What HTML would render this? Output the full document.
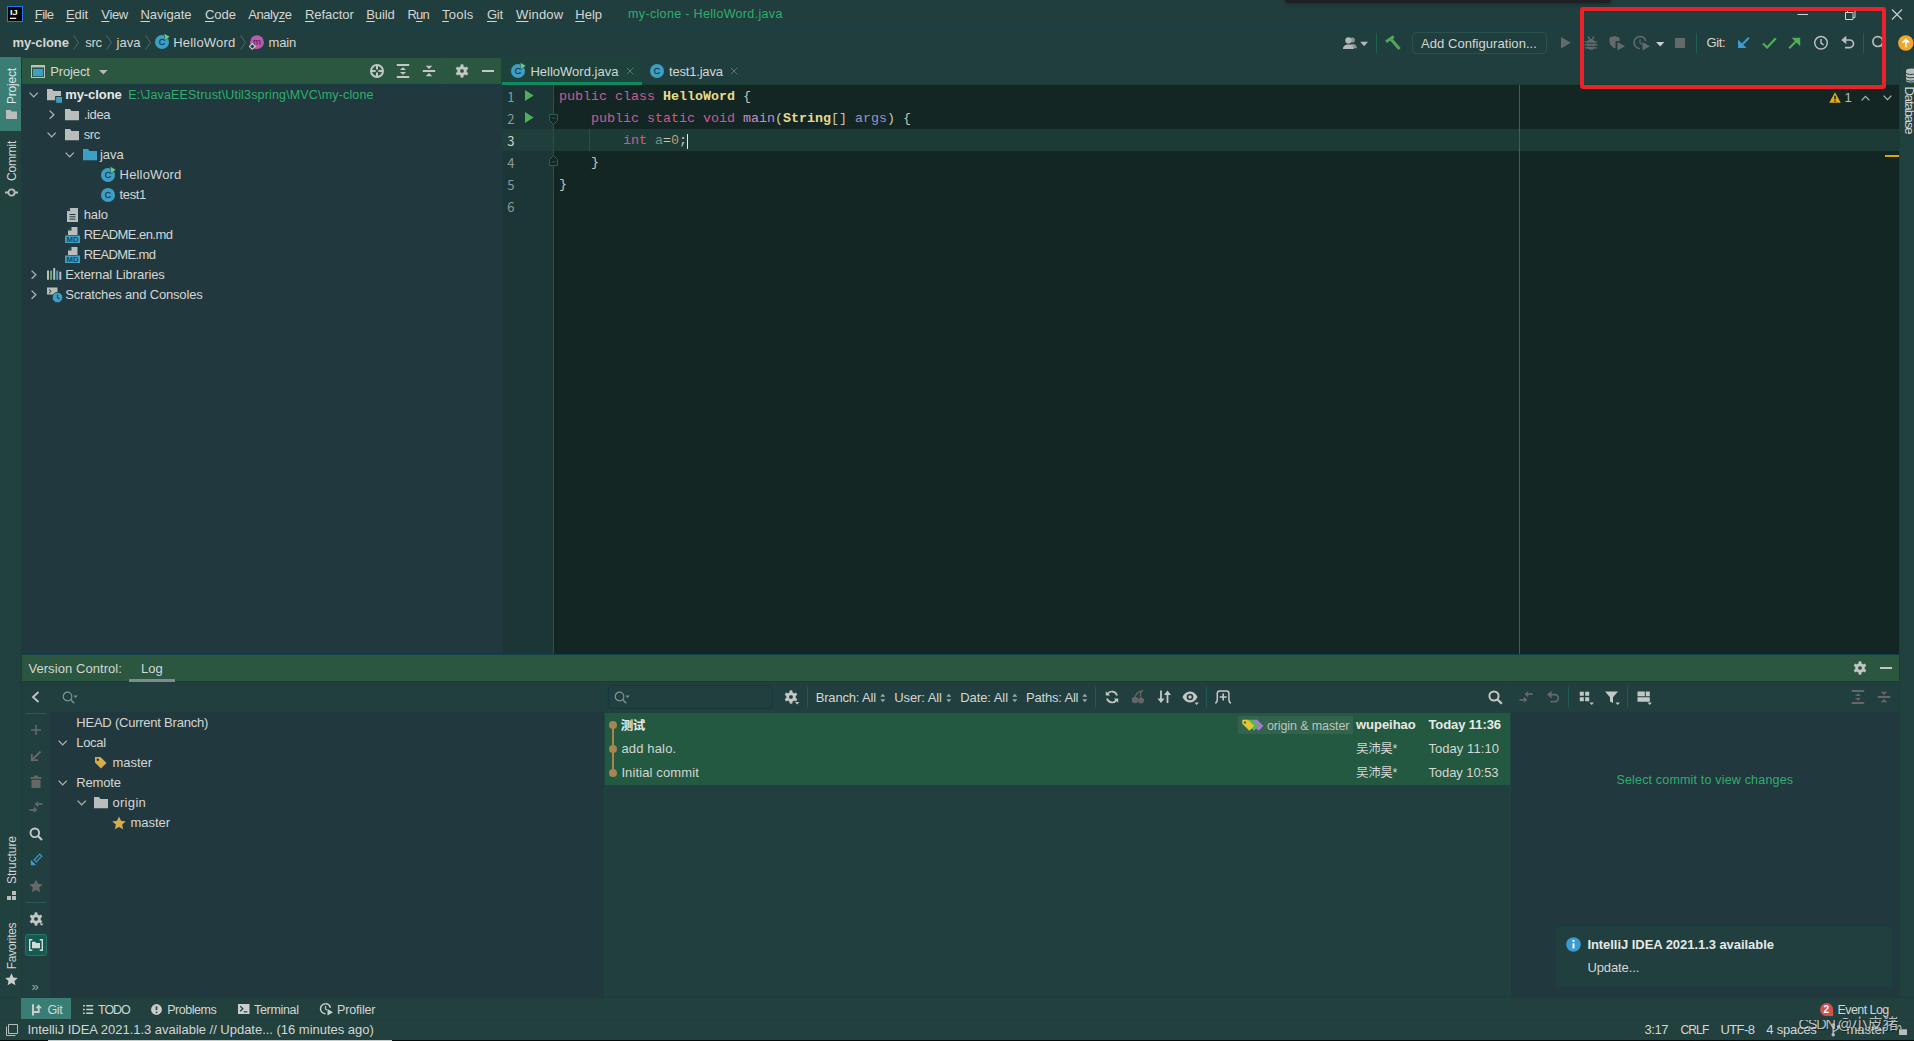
<!DOCTYPE html>
<html lang="en">
<head>
<meta charset="utf-8">
<title>my-clone - HelloWord.java</title>
<style>
*{box-sizing:border-box;margin:0;padding:0}
html,body{width:1914px;height:1041px;overflow:hidden;background:#213e3e}
body{position:relative;font-family:"Liberation Sans","Noto Sans CJK SC",sans-serif;font-size:13px;color:#d4d6d3;line-height:1}
.a{position:absolute}
.t{position:absolute;white-space:nowrap;line-height:16px;height:16px;transform-origin:0 50%}
.b{font-weight:bold}
.g{color:#2fae6d}
u{text-decoration-thickness:1px;text-underline-offset:2px}
.mono{font-family:"Liberation Mono",monospace;font-size:13.333px;line-height:22px;white-space:pre;position:absolute;height:22px}
.kw{color:#cf5a8f}
.cls{color:#e6dc8c;font-weight:bold}
.pl{color:#c5c8b4}
.arg{color:#9d90c8}
.lv{color:#6f9384}
.ln{position:absolute;left:507.3px;width:20px;font-size:13px;font-family:"Noto Sans CJK SC","Liberation Sans",sans-serif;color:#8ea09c;height:22px;line-height:22px}
svg{position:absolute;overflow:visible}
</style>
</head>
<body>
<!-- ===== base regions ===== -->
<div class="a" id="menubar" style="left:0;top:0;width:1914px;height:28px;background:#213e3e"></div>
<div class="a" style="left:0;top:28px;width:1914px;height:1px;background:#173f48"></div>
<div class="a" id="navbar" style="left:0;top:29px;width:1914px;height:28px;background:#213e3e"></div>
<div class="a" style="left:0;top:57px;width:1914px;height:1px;background:#144834"></div>
<!-- left stripe -->
<div class="a" id="lstripe" style="left:0;top:58px;width:22px;height:939px;background:#21413e;border-right:1px solid #1b3c3a"></div>
<div class="a" style="left:0;top:57px;width:21px;height:74px;background:#3a7d74"></div>
<!-- project panel -->
<div class="a" id="projhead" style="left:22px;top:58px;width:479px;height:26px;background:#2b5741"></div>
<div class="a" id="projtree" style="left:22px;top:84px;width:479px;height:570px;background:#21393e"></div>
<!-- editor -->
<div class="a" id="tabs" style="left:502px;top:58px;width:1397px;height:27px;background:#213e3e"></div>
<div class="a" style="left:502px;top:84px;width:1397px;height:1px;background:#143f31"></div>
<div class="a" id="editor" style="left:502px;top:85px;width:1397px;height:569px;background:#132623"></div>
<div class="a" id="gutter" style="left:502px;top:85px;width:52px;height:569px;background:#1c3637"></div>
<div class="a" style="left:553px;top:85px;width:1px;height:569px;background:#2b4f4b"></div>
<div class="a" style="left:501px;top:58px;width:1px;height:596px;background:#18443c"></div>
<!-- right stripe -->
<div class="a" id="rstripe" style="left:1899px;top:58px;width:15px;height:939px;background:#21413e;border-left:1px solid #1b3c3a"></div>
<!-- bottom panel -->
<div class="a" style="left:22px;top:654px;width:1877px;height:1px;background:#123f47"></div>
<div class="a" id="vchead" style="left:22px;top:655px;width:1877px;height:26px;background:#2b5741"></div>
<div class="a" style="left:22px;top:681px;width:1877px;height:1px;background:#113c45"></div>
<div class="a" id="vcbody" style="left:22px;top:682px;width:1877px;height:315px;background:#21393e"></div>
<!-- bottom stripes -->
<div class="a" style="left:0;top:997px;width:1914px;height:1px;background:#1a3d3e;z-index:2"></div>
<div class="a" id="bstripe" style="left:0;top:997px;width:1914px;height:23px;background:#21403e"></div>
<div class="a" style="left:0;top:1019px;width:1914px;height:1px;background:#173f45;z-index:2"></div>
<div class="a" id="status" style="left:0;top:1020px;width:1914px;height:21px;background:#21403e;border-bottom:1px solid #050808"></div>
<svg style="left:7px;top:6px;" width="16" height="16" viewBox="0 0 16 16"><rect x="0.500" y="0.500" width="15" height="15" fill="#000" stroke="#2178f2" stroke-width="1"/><text x="3" y="8.800" font-family="Liberation Sans,sans-serif" font-weight="bold" font-size="7.800" fill="#fff" textLength="7.800" lengthAdjust="spacingAndGlyphs">IJ</text><rect x="3" y="11.700" width="6.200" height="1.200" fill="#fff"/></svg>
<svg style="left:1797px;top:9px;" width="110" height="12" viewBox="0 0 110 12"><path d="M0.5 5.5h10.5" stroke="#cfd3d1" stroke-width="1" fill="none"/><path d="M48.5 3.5h7.5v7h-7.5zM50.5 3.5v-2h7.5v7h-2" stroke="#cfd3d1" stroke-width="1" fill="none"/><path d="M95 0.5l10 10M105 0.5l-10 10" stroke="#cfd3d1" stroke-width="1.1" fill="none"/></svg>
<div class="a" style="left:1285px;top:0px;width:326px;height:2.6px;background:#1e2024;border-radius:0 0 5px 5px;box-shadow:0 1px 4px rgba(0,0,0,0.4)"></div>
<div class="t" style="left:34.8px;top:6.5px;letter-spacing:-0.57px"><u>F</u>ile</div>
<div class="t" style="left:65.9px;top:6.5px;letter-spacing:-0.08px"><u>E</u>dit</div>
<div class="t" style="left:101.3px;top:6.5px;letter-spacing:-0.36px"><u>V</u>iew</div>
<div class="t" style="left:140.5px;top:6.5px;letter-spacing:-0.03px"><u>N</u>avigate</div>
<div class="t" style="left:205px;top:6.5px;letter-spacing:-0.07px"><u>C</u>ode</div>
<div class="t" style="left:248.2px;top:6.5px;letter-spacing:-0.41px">Analy<u>z</u>e</div>
<div class="t" style="left:305px;top:6.5px;letter-spacing:-0.04px"><u>R</u>efactor</div>
<div class="t" style="left:366.2px;top:6.5px;letter-spacing:-0.10px"><u>B</u>uild</div>
<div class="t" style="left:407.4px;top:6.5px;letter-spacing:-0.72px">R<u>u</u>n</div>
<div class="t" style="left:442.1px;top:6.5px;letter-spacing:0.23px"><u>T</u>ools</div>
<div class="t" style="left:487px;top:6.5px;letter-spacing:-0.31px"><u>G</u>it</div>
<div class="t" style="left:516px;top:6.5px;letter-spacing:0.16px"><u>W</u>indow</div>
<div class="t" style="left:575.3px;top:6.5px;letter-spacing:-0.01px"><u>H</u>elp</div>
<div class="t" style="left:628.1px;top:6px;font-size:12.5px;color:#2fae6d;letter-spacing:0.33px">my-clone - HelloWord.java</div>

<svg style="left:72.8px;top:35px;" width="6" height="15" viewBox="0 0 6 15"><path d="M0.500 0.400l5 7.100l-5 7.100" stroke="#4f6c6a" stroke-width="1" fill="none"/></svg>
<svg style="left:106.2px;top:35px;" width="6" height="15" viewBox="0 0 6 15"><path d="M0.500 0.400l5 7.100l-5 7.100" stroke="#4f6c6a" stroke-width="1" fill="none"/></svg>
<svg style="left:144.8px;top:35px;" width="6" height="15" viewBox="0 0 6 15"><path d="M0.500 0.400l5 7.100l-5 7.100" stroke="#4f6c6a" stroke-width="1" fill="none"/></svg>
<svg style="left:240px;top:35px;" width="6" height="15" viewBox="0 0 6 15"><path d="M0.500 0.400l5 7.100l-5 7.100" stroke="#4f6c6a" stroke-width="1" fill="none"/></svg>
<svg style="left:154.3px;top:34.3px;" width="16" height="16" viewBox="0 0 16 16"><circle cx="8" cy="8" r="7" fill="#3d9fc6"/><text x="8" y="11.4" text-anchor="middle" font-family="Liberation Sans,sans-serif" font-size="9.5" fill="#173f50" textLength="6.400" lengthAdjust="spacingAndGlyphs" stroke="#173f50" stroke-width="0.300">C</text><path d="M10.3 -0.6l5.700 3.300l-5.200 3.900z" fill="#6acb86" stroke="#21403d" stroke-width="0.500"/></svg>
<svg style="left:249px;top:34px;" width="16" height="16" viewBox="0 0 16 16"><circle cx="8" cy="8.200" r="6.900" fill="#b85bab"/><text x="8" y="10.800" text-anchor="middle" font-family="Liberation Sans,sans-serif" font-size="9.500" fill="#451a42">m</text><path d="M3.300 9.500l2.900 2.900l-2.900 2.900l-2.900-2.900z" fill="#213e3e" stroke="#cfd4d3" stroke-width="1.100"/></svg>
<svg style="left:1343px;top:37px;" width="26" height="12" viewBox="0 0 26 12"><circle cx="9.300" cy="3" r="2.600" fill="#8e9494"/><path d="M7.500 7h3c2.300.700 3.500 1.700 3.500 4.300h-4z" fill="#8e9494"/><circle cx="5.400" cy="3.400" r="3.100" fill="#b3b8b8"/><path d="M0 12c0-2.600 1.300-3.700 3.900-4.500h3c2.600.8 3.900 1.900 3.900 4.500z" fill="#b3b8b8"/><path d="M17.200 4.800h7.800l-3.900 4.400z" fill="#b3b8b8"/></svg>
<div class="a" style="left:1376px;top:33px;width:1px;height:20px;background:#1f5f52;"></div>
<svg style="left:1385px;top:36px;" width="16" height="14" viewBox="0 0 16 14"><path d="M1 5.800l7.800-5.300" stroke="#4fa85a" stroke-width="3" fill="none"/><path d="M6 3.300l8.600 9.600" stroke="#4fa85a" stroke-width="3" fill="none"/></svg>
<div class="a" style="left:1412px;top:32px;width:135px;height:22px;border:1px solid #29524a;border-radius:4px"></div>
<svg style="left:1561px;top:37.3px;" width="10" height="12" viewBox="0 0 10 12"><path d="M0 0l9.800 5.800l-9.800 5.800z" fill="#636a6a"/></svg>
<svg style="left:1584px;top:36px;" width="14" height="14" viewBox="0 0 14 14"><path d="M3.800 0.500l2 2.200M10.200 0.500l-2 2.200" stroke="#636a6a" stroke-width="1.400"/><ellipse cx="7" cy="8.300" rx="4.300" ry="5.500" fill="#636a6a"/><path d="M0.800 5.800h12.400M0.500 8.800h13M0.800 11.800h12.400" stroke="#636a6a" stroke-width="1.300"/><path d="M3.600 7.300h6.800M3.600 10.300h6.800" stroke="#213c3d" stroke-width="1"/></svg>
<svg style="left:1608px;top:35px;" width="18" height="16" viewBox="0 0 18 16"><path d="M1.500 2.500l5-1.500l5 1.500v3.500l-4 0v7.500c-3.500-1-6-4-6-7.500z" fill="#636a6a"/><path d="M9.500 7l7.500 4.300l-7.500 4.300z" fill="#636a6a"/></svg>
<svg style="left:1632px;top:35px;" width="20" height="16" viewBox="0 0 20 16"><path d="M8 1.500a6 6 0 1 0 .01 12" stroke="#636a6a" stroke-width="1.600" fill="none"/><path d="M8 1.500a6 6 0 0 1 5.800 4.500" stroke="#636a6a" stroke-width="1.600" fill="none"/><path d="M8 4.500v3.500l2 1.500" stroke="#636a6a" stroke-width="1.300" fill="none"/><path d="M10.500 7l7.500 4.300l-7.500 4.300z" fill="#636a6a"/></svg>
<svg style="left:1656px;top:41.7px;" width="9" height="5" viewBox="0 0 9 5"><path d="M0 0h8.400l-4.200 4.600z" fill="#c9cecd"/></svg>
<div class="a" style="left:1675px;top:38px;width:10px;height:10px;background:#636a6a;"></div>
<div class="a" style="left:1696px;top:33px;width:1px;height:20px;background:#1f5f52;"></div>
<svg style="left:1737px;top:36px;" width="14" height="14" viewBox="0 0 14 14"><path d="M11.900 1.700l-7.500 7.500" stroke="#3b9ad0" stroke-width="2.100" fill="none"/><path d="M1 3.400v8.600h8.600z" fill="#3b9ad0"/></svg>
<svg style="left:1761px;top:36px;" width="18" height="14" viewBox="0 0 18 14"><path d="M2 7.500l4.200 4l8.600-9.300" stroke="#4fae5a" stroke-width="2.200" fill="none"/></svg>
<svg style="left:1787px;top:36px;" width="16" height="14" viewBox="0 0 16 14"><path d="M2.200 12.300l7.500-7.500" stroke="#4fae5a" stroke-width="2.100" fill="none"/><path d="M4.600 1.700h8.600v8.600z" fill="#4fae5a"/></svg>
<svg style="left:1813px;top:35px;" width="16" height="16" viewBox="0 0 16 16"><circle cx="8" cy="7.800" r="6.300" stroke="#b9bdbd" stroke-width="1.500" fill="none"/><path d="M8 4v4l2.600 1.800" stroke="#b9bdbd" stroke-width="1.500" fill="none"/></svg>
<svg style="left:1840px;top:35px;" width="16" height="16" viewBox="0 0 16 16"><path d="M5.500 5h4.200a3.800 3.800 0 0 1 0 7.600h-4.700" stroke="#b9bdbd" stroke-width="1.700" fill="none"/><path d="M6.300 0.800v8.400l-5-4.200z" fill="#b9bdbd"/></svg>
<div class="a" style="left:1863px;top:33px;width:1px;height:20px;background:#1f5f52;"></div>
<svg style="left:1871px;top:35px;" width="16" height="16" viewBox="0 0 16 16"><circle cx="6.800" cy="6.600" r="4.900" stroke="#b9bdbd" stroke-width="1.700" fill="none"/><path d="M10.300 10.200l4.200 4.300" stroke="#b9bdbd" stroke-width="1.900" fill="none"/></svg>
<svg style="left:1898px;top:35px;" width="16" height="16" viewBox="0 0 16 16"><circle cx="7.800" cy="8" r="7.700" fill="#f0a732"/><path d="M7.800 12.300v-7.500M4.600 7.600l3.200-3.200l3.200 3.200" stroke="#fff" stroke-width="1.700" fill="none"/></svg>
<div class="t" style="left:12.4px;top:34.5px;font-weight:bold;letter-spacing:-0.07px">my-clone</div>
<div class="t" style="left:85.3px;top:34.5px;letter-spacing:-0.31px">src</div>
<div class="t" style="left:116.5px;top:34.5px;letter-spacing:0.04px">java</div>
<div class="t" style="left:173.2px;top:34.5px;letter-spacing:0.21px">HelloWord</div>
<div class="t" style="left:268.6px;top:34.5px;letter-spacing:-0.20px">main</div>
<div class="t" style="left:1421px;top:35.7px;letter-spacing:0.05px">Add Configuration...</div>
<div class="t" style="left:1706.5px;top:35px;letter-spacing:-0.36px">Git:</div>

<svg style="left:31px;top:65px;" width="14" height="13" viewBox="0 0 14 13"><rect x="0.500" y="0.500" width="13" height="12" fill="none" stroke="#b9c3bd" stroke-width="1"/><rect x="0" y="0" width="14" height="2.400" fill="#b9c3bd"/><rect x="2" y="4" width="10" height="7.200" fill="#3d9fc6"/></svg>
<svg style="left:99px;top:70px;" width="9" height="5" viewBox="0 0 9 5"><path d="M0 0h8.600l-4.300 4.600z" fill="#b4b9b8"/></svg>
<svg style="left:370px;top:64px;" width="14" height="14" viewBox="0 0 14 14"><circle cx="7" cy="7" r="6" stroke="#c3c8c6" stroke-width="2" fill="none"/><path d="M7 1v4.600M7 8.400v4.600M1 7h4.600M8.400 7h4.600" stroke="#c3c8c6" stroke-width="2"/></svg>
<svg style="left:396px;top:64px;" width="14" height="14" viewBox="0 0 14 14"><path d="M0.800 1h12.400M0.800 13h12.400" stroke="#c3c8c6" stroke-width="2"/><path d="M7 3.300l3.100 2.800h-6.200zM7 10.700l3.100-2.800h-6.200z" fill="#c3c8c6"/></svg>
<svg style="left:422px;top:64px;" width="14" height="14" viewBox="0 0 14 14"><path d="M0.800 7h12.400" stroke="#c3c8c6" stroke-width="2"/><path d="M7 4.900l3.300-3.200h-6.600zM7 9.100l3.300 3.200h-6.600z" fill="#c3c8c6"/></svg>
<div class="a" style="left:445px;top:62px;width:1px;height:19px;background:#1f5a55;"></div>
<div class="a" style="left:22px;top:84px;width:479px;height:1px;background:#143f42;"></div>
<svg style="left:455px;top:64px;" width="14" height="14" viewBox="0 0 14 14"><path d="M5.61 2.51L5.83 0.61L8.17 0.61L8.39 2.51L10.19 3.55L11.95 2.79L13.12 4.81L11.58 5.96L11.58 8.04L13.12 9.19L11.95 11.21L10.19 10.45L8.39 11.49L8.17 13.39L5.83 13.39L5.61 11.49L3.81 10.45L2.05 11.21L0.88 9.19L2.42 8.04L2.42 5.96L0.88 4.81L2.05 2.79L3.81 3.55zM9.10 7.00a2.1 2.1 0 1 0 -4.20 0a2.1 2.1 0 1 0 4.20 0z" fill="#c3c8c6" fill-rule="evenodd" stroke="#c3c8c6" stroke-width="0.3" stroke-linejoin="round"/></svg>
<div class="a" style="left:482px;top:70px;width:12px;height:2px;background:#c3c8c6;"></div>
<svg style="left:6px;top:110px;" width="11" height="9" viewBox="0 0 11 9"><path d="M0 0h4.500l1 1.500h5.500v7.500h-11z" fill="#b9bebd"/></svg>
<svg style="left:5px;top:187.5px;" width="13" height="9" viewBox="0 0 13 9"><circle cx="6.500" cy="4.500" r="3.100" stroke="#b9bebd" stroke-width="1.800" fill="none"/><path d="M0 4.500h3.200M9.800 4.500h3.200" stroke="#b9bebd" stroke-width="1.800"/></svg>
<svg style="left:28.5px;top:92px;" width="10" height="6" viewBox="0 0 10 6"><path d="M0.600 0.600l4.100 4.300l4.100-4.300" stroke="#aeb4b3" stroke-width="1.300" fill="none"/></svg>
<svg style="left:47px;top:89px;" width="16" height="14" viewBox="0 0 16 14"><path d="M0 0h5l1.500 2h7.500v9.200h-14z" fill="#b9bebd"/><rect x="8.700" y="7.500" width="6.800" height="6.800" fill="#3d9fc6" stroke="#213a3d" stroke-width="1"/></svg>
<svg style="left:49px;top:110.2px;" width="6" height="10" viewBox="0 0 6 10"><path d="M0.600 0.600l4.300 4.100l-4.300 4.100" stroke="#aeb4b3" stroke-width="1.300" fill="none"/></svg>
<svg style="left:65px;top:109px;" width="14" height="12" viewBox="0 0 14 12"><path d="M0 0h5l1.500 2h7.500v9.200h-14z" fill="#b9bebd"/></svg>
<svg style="left:46.7px;top:132px;" width="10" height="6" viewBox="0 0 10 6"><path d="M0.600 0.600l4.100 4.300l4.100-4.300" stroke="#aeb4b3" stroke-width="1.300" fill="none"/></svg>
<svg style="left:65px;top:129px;" width="14" height="12" viewBox="0 0 14 12"><path d="M0 0h5l1.500 2h7.500v9.200h-14z" fill="#b9bebd"/></svg>
<svg style="left:65.2px;top:152px;" width="10" height="6" viewBox="0 0 10 6"><path d="M0.600 0.600l4.100 4.300l4.100-4.300" stroke="#aeb4b3" stroke-width="1.300" fill="none"/></svg>
<svg style="left:83px;top:149px;" width="14" height="12" viewBox="0 0 14 12"><path d="M0 0h5l1.500 2h7.500v9.200h-14z" fill="#3d9fc6"/></svg>
<svg style="left:100.3px;top:166.8px;" width="16" height="16" viewBox="0 0 16 16"><circle cx="8" cy="8" r="7" fill="#3d9fc6"/><text x="8" y="11.4" text-anchor="middle" font-family="Liberation Sans,sans-serif" font-size="9.5" fill="#173f50" textLength="6.400" lengthAdjust="spacingAndGlyphs" stroke="#173f50" stroke-width="0.300">C</text><path d="M10.3 -0.6l5.700 3.300l-5.200 3.900z" fill="#6acb86" stroke="#21403d" stroke-width="0.500"/></svg>
<svg style="left:100.3px;top:186.8px;" width="16" height="16" viewBox="0 0 16 16"><circle cx="8" cy="8" r="7" fill="#3d9fc6"/><text x="8" y="11.4" text-anchor="middle" font-family="Liberation Sans,sans-serif" font-size="9.5" fill="#173f50" textLength="6.400" lengthAdjust="spacingAndGlyphs" stroke="#173f50" stroke-width="0.300">C</text></svg>
<svg style="left:67px;top:208px;" width="11" height="14" viewBox="0 0 11 14"><path d="M3.500 0h7.500v14h-11v-10.500z" fill="#b9bebd"/><path d="M0 3.500h3.500v-3.500" fill="#213a3d" stroke="#b9bebd" stroke-width="0.800"/><path d="M2.500 6.500h6M2.500 8.800h6M2.500 11.100h6" stroke="#213a3d" stroke-width="1"/></svg>
<svg style="left:65px;top:227px;" width="16" height="16" viewBox="0 0 16 16"><path d="M6.500 0h6v8h-9.500v-4.500z" fill="#b9bebd"/><path d="M3 3.500h3.500v-3.500" fill="#213a3d"/><rect x="0" y="8.500" width="15" height="7.500" fill="#3d9fc6"/><text x="7.500" y="15" text-anchor="middle" font-family="Liberation Sans,sans-serif" font-weight="bold" font-size="6.500" fill="#1d4a5c" textLength="12" lengthAdjust="spacingAndGlyphs">MD</text></svg>
<svg style="left:65px;top:247px;" width="16" height="16" viewBox="0 0 16 16"><path d="M6.500 0h6v8h-9.500v-4.500z" fill="#b9bebd"/><path d="M3 3.500h3.500v-3.500" fill="#213a3d"/><rect x="0" y="8.500" width="15" height="7.500" fill="#3d9fc6"/><text x="7.500" y="15" text-anchor="middle" font-family="Liberation Sans,sans-serif" font-weight="bold" font-size="6.500" fill="#1d4a5c" textLength="12" lengthAdjust="spacingAndGlyphs">MD</text></svg>
<svg style="left:30.5px;top:270.2px;" width="6" height="10" viewBox="0 0 6 10"><path d="M0.600 0.600l4.300 4.100l-4.300 4.100" stroke="#aeb4b3" stroke-width="1.300" fill="none"/></svg>
<svg style="left:46.8px;top:268px;" width="15" height="12" viewBox="0 0 15 12"><path d="M1 2.600v9.200M7.200 0.100v11.700M13.300 3.800v8" stroke="#b9bebd" stroke-width="2"/><path d="M4.100 2.600v9.200" stroke="#5fb865" stroke-width="1.900"/><path d="M10.200 2.600v9.200" stroke="#3d9fc6" stroke-width="1.900"/></svg>
<svg style="left:30.5px;top:290.2px;" width="6" height="10" viewBox="0 0 6 10"><path d="M0.600 0.600l4.300 4.100l-4.300 4.100" stroke="#aeb4b3" stroke-width="1.300" fill="none"/></svg>
<svg style="left:47px;top:287px;" width="16" height="16" viewBox="0 0 16 16"><path d="M0 0.500h10.500v7h-10.500z" fill="#b9bebd"/><path d="M2 2.500l2.200 1.800l-2.200 1.800" stroke="#213a3d" stroke-width="1" fill="none"/><circle cx="10.500" cy="10.500" r="5.200" fill="#3d9fc6" stroke="#213a3d" stroke-width="0.800"/><path d="M10.500 7.500v3.200l2 1.300" stroke="#1d4a5c" stroke-width="1.100" fill="none"/></svg>
<div class="t" style="left:50.3px;top:64px;letter-spacing:-0.15px">Project</div>
<div class="t" style="left:-5.6px;top:77.5px;width:36.0px;transform-origin:50% 50%;transform:rotate(-90deg);font-size:12px;color:#dfe5e2;letter-spacing:-0.19px">Project</div>
<div class="t" style="left:-7.6px;top:153.0px;width:40px;transform-origin:50% 50%;transform:rotate(-90deg);font-size:12px;letter-spacing:-0.22px">Commit</div>
<div class="t" style="left:65.2px;top:87px;color:#e6e9e6;font-weight:bold;letter-spacing:-0.07px">my-clone</div>
<div class="t" style="left:128.3px;top:87px;font-size:12.5px;color:#2fae6d;letter-spacing:0.16px">E:\JavaEEStrust\Util3spring\MVC\my-clone</div>
<div class="t" style="left:83.7px;top:107px;letter-spacing:-0.32px">.idea</div>
<div class="t" style="left:83.7px;top:127px;letter-spacing:-0.35px">src</div>
<div class="t" style="left:100px;top:147px;letter-spacing:-0.06px">java</div>
<div class="t" style="left:119.6px;top:167px;letter-spacing:0.16px">HelloWord</div>
<div class="t" style="left:119.6px;top:187px;letter-spacing:-0.36px">test1</div>
<div class="t" style="left:83.7px;top:207px;letter-spacing:-0.09px">halo</div>
<div class="t" style="left:83.7px;top:227px;letter-spacing:-0.56px">README.en.md</div>
<div class="t" style="left:83.7px;top:247px;letter-spacing:-0.62px">README.md</div>
<div class="t" style="left:65.2px;top:267px;letter-spacing:-0.09px">External Libraries</div>
<div class="t" style="left:65.2px;top:287px;letter-spacing:-0.16px">Scratches and Consoles</div>

<div class="a" style="left:502px;top:58px;width:140px;height:27px;background:#1d423c;"></div>
<div class="a" style="left:502px;top:82px;width:140px;height:3px;background:#108a5f;"></div>
<svg style="left:510px;top:63px;" width="16" height="16" viewBox="0 0 16 16"><circle cx="8" cy="8" r="7" fill="#3d9fc6"/><text x="8" y="11.4" text-anchor="middle" font-family="Liberation Sans,sans-serif" font-size="9.5" fill="#173f50" textLength="6.400" lengthAdjust="spacingAndGlyphs" stroke="#173f50" stroke-width="0.300">C</text><path d="M10.3 -0.6l5.700 3.300l-5.200 3.900z" fill="#6acb86" stroke="#21403d" stroke-width="0.500"/></svg>
<svg style="left:626px;top:67px;" width="8" height="8" viewBox="0 0 8 8"><path d="M0.700 0.700l6.600 6.600M7.300 0.700l-6.600 6.600" stroke="#5d7674" stroke-width="1"/></svg>
<svg style="left:649px;top:63px;" width="16" height="16" viewBox="0 0 16 16"><circle cx="8" cy="8" r="7" fill="#3d9fc6"/><text x="8" y="11.4" text-anchor="middle" font-family="Liberation Sans,sans-serif" font-size="9.5" fill="#173f50" textLength="6.400" lengthAdjust="spacingAndGlyphs" stroke="#173f50" stroke-width="0.300">C</text></svg>
<svg style="left:730px;top:67px;" width="8" height="8" viewBox="0 0 8 8"><path d="M0.700 0.700l6.600 6.600M7.300 0.700l-6.600 6.600" stroke="#5d7674" stroke-width="1"/></svg>
<div class="a" style="left:554px;top:129px;width:1345px;height:22px;background:#1d3b36;"></div>
<div class="a" style="left:502px;top:129px;width:51px;height:22px;background:#203e3b;"></div>
<div class="a" style="left:1519px;top:85px;width:1px;height:569px;background:#2e675d;"></div>
<div class="a" style="left:589px;top:129px;width:1px;height:22px;background:#2a504b;"></div>
<div class="ln" style="top:85.5px;color:#8a9c98">1</div>
<div class="ln" style="top:107.5px;color:#8a9c98">2</div>
<div class="ln" style="top:129.5px;color:#cfd3d0">3</div>
<div class="ln" style="top:151.5px;color:#8a9c98">4</div>
<div class="ln" style="top:173.5px;color:#8a9c98">5</div>
<div class="ln" style="top:195.5px;color:#8a9c98">6</div>
<svg style="left:525px;top:90px;" width="9" height="11" viewBox="0 0 9 11"><path d="M0 0l8.600 5.500l-8.600 5.500z" fill="#4fae5a"/></svg>
<svg style="left:525px;top:112px;" width="9" height="11" viewBox="0 0 9 11"><path d="M0 0l8.600 5.500l-8.600 5.500z" fill="#4fae5a"/></svg>
<svg style="left:549px;top:114px;" width="9" height="11" viewBox="0 0 9 11"><path d="M0.500 0.500h8v6l-4 4l-4-4z" fill="#132623" stroke="#2e5f57" stroke-width="1"/><path d="M2.500 4h4" stroke="#2e5f57" stroke-width="1"/></svg>
<svg style="left:549px;top:155px;" width="9" height="11" viewBox="0 0 9 11"><path d="M0.500 10.500h8v-6l-4-4l-4 4z" fill="#132623" stroke="#2e5f57" stroke-width="1"/><path d="M2.500 7h4" stroke="#2e5f57" stroke-width="1"/></svg>
<div class="mono" style="left:559px;top:86px"><span class="kw">public class </span><span class="cls">HelloWord</span><span class="pl"> {</span></div>
<div class="mono" style="left:559px;top:108px">    <span class="kw">public static void </span><span style="color:#c98cc6">main</span><span class="pl">(</span><span class="cls">String</span><span class="pl">[] </span><span class="arg">args</span><span class="pl">) {</span></div>
<div class="mono" style="left:559px;top:130px">        <span class="kw">int </span><span class="lv">a</span><span class="pl">=</span><span style="color:#cf9767">0</span><span class="pl">;</span></div>
<div class="mono" style="left:559px;top:152px">    <span class="pl">}</span></div>
<div class="mono" style="left:559px;top:174px"><span class="pl">}</span></div>
<div class="a" style="left:686.6px;top:134px;width:1.7px;height:14.5px;background:#e8ebe8;"></div>
<svg style="left:1829px;top:92px;" width="12" height="11" viewBox="0 0 12 11"><path d="M6 0.300l5.800 10.400h-11.600z" fill="#e0aa1c"/><path d="M6 3.800v3.600M6 8.400v1.400" stroke="#142524" stroke-width="1.500"/></svg>
<svg style="left:1861px;top:95px;" width="9" height="6" viewBox="0 0 9 6"><path d="M0.600 5.400l3.900-4l3.900 4" stroke="#aeb4b3" stroke-width="1.300" fill="none"/></svg>
<svg style="left:1882.5px;top:95px;" width="9" height="6" viewBox="0 0 9 6"><path d="M0.600 0.600l3.900 4l3.900-4" stroke="#aeb4b3" stroke-width="1.300" fill="none"/></svg>
<div class="a" style="left:1885px;top:155px;width:14px;height:2px;background:#d9a514;"></div>
<svg style="left:1905px;top:68px;" width="12" height="13" viewBox="0 0 12 13"><path d="M1 2.500c0-2.800 10-2.800 10 0v10c0 2.800-10 2.800-10 0z" fill="#b9bebd"/><path d="M1 5c1.500 2 8.500 2 10 0M1 8.300c1.500 2 8.500 2 10 0M1 11.600c1.500 2 8.500 2 10 0" stroke="#22423f" stroke-width="1" fill="none"/></svg>
<div class="t" style="left:530.4px;top:64px;letter-spacing:0.01px">HelloWord.java</div>
<div class="t" style="left:669px;top:64px;letter-spacing:-0.19px">test1.java</div>
<div class="t" style="left:1844.5px;top:89.5px;color:#b7bdbb;font-family:"Noto Sans CJK SC","Liberation Sans",sans-serif">1</div>
<div class="t" style="left:1884.5px;top:101.5px;width:47px;transform-origin:50% 50%;transform:rotate(90deg);letter-spacing:-1.08px">Database</div>

<div class="a" style="left:22px;top:682px;width:1877px;height:30px;background:#213f3e;"></div>
<div class="a" style="left:22px;top:712px;width:28px;height:285px;background:#213f3e;"></div>
<div class="a" style="left:604px;top:682px;width:1px;height:315px;background:#1e4441;"></div>
<div class="a" style="left:605px;top:712px;width:905px;height:285px;background:#213f3e;"></div>
<div class="a" style="left:1510px;top:682px;width:1px;height:315px;background:#1e4441;"></div>
<div class="a" style="left:129px;top:679px;width:46px;height:3px;background:#808c8d;"></div>
<svg style="left:1853px;top:661px;" width="14" height="14" viewBox="0 0 14 14"><path d="M5.61 2.51L5.83 0.61L8.17 0.61L8.39 2.51L10.19 3.55L11.95 2.79L13.12 4.81L11.58 5.96L11.58 8.04L13.12 9.19L11.95 11.21L10.19 10.45L8.39 11.49L8.17 13.39L5.83 13.39L5.61 11.49L3.81 10.45L2.05 11.21L0.88 9.19L2.42 8.04L2.42 5.96L0.88 4.81L2.05 2.79L3.81 3.55zM9.10 7.00a2.1 2.1 0 1 0 -4.20 0a2.1 2.1 0 1 0 4.20 0z" fill="#c3c8c6" fill-rule="evenodd" stroke="#c3c8c6" stroke-width="0.3" stroke-linejoin="round"/></svg>
<div class="a" style="left:1880px;top:667px;width:12px;height:2px;background:#c3c8c6;"></div>
<svg style="left:31px;top:691px;" width="9" height="12" viewBox="0 0 9 12"><path d="M7.500 1l-5.500 5l5.500 5" stroke="#c3c8c6" stroke-width="1.800" fill="none"/></svg>
<div class="a" style="left:26px;top:713px;width:20px;height:1px;background:#2a5a55;"></div>
<svg style="left:62px;top:691px;" width="16" height="13" viewBox="0 0 16 13"><circle cx="5.500" cy="5.500" r="4.300" stroke="#7f9391" stroke-width="1.200" fill="none"/><path d="M8.600 8.600l3.600 3.600" stroke="#7f9391" stroke-width="1.400"/><path d="M11.500 4.500h4.200l-2.100 2.400z" fill="#7f9391"/></svg>
<svg style="left:30px;top:724px;" width="12" height="12" viewBox="0 0 12 12"><path d="M6 1v10M1 6h10" stroke="#666767" stroke-width="1.600"/></svg>
<svg style="left:30px;top:750px;" width="12" height="12" viewBox="0 0 12 12"><path d="M10.500 1.500l-8 8M1.800 4v6.200h6.200" stroke="#666767" stroke-width="1.800" fill="none"/></svg>
<svg style="left:30px;top:775px;" width="12" height="13" viewBox="0 0 12 13"><path d="M0.500 2h11v1.800h-11zM4 0.500h4v1.500h-4zM1.500 4.800h9v8.200h-9z" fill="#666767"/></svg>
<svg style="left:29px;top:800px;" width="14" height="14" viewBox="0 0 14 14"><path d="M0.500 9.800h5.500M13.500 4.200h-5.500" stroke="#666767" stroke-width="1.700"/><path d="M4.800 6.600l3.600 3.200l-3.600 3.200zM9.200 1l-3.600 3.200l3.600 3.200z" fill="#666767"/></svg>
<svg style="left:29px;top:827px;" width="14" height="14" viewBox="0 0 14 14"><circle cx="5.800" cy="5.800" r="4.300" stroke="#c3c8c6" stroke-width="1.900" fill="none"/><path d="M9 9l4 4" stroke="#c3c8c6" stroke-width="2.200"/></svg>
<svg style="left:30px;top:853px;" width="13" height="13" viewBox="0 0 13 13"><path d="M11.800 3.200l-5.600 5.600l-2-2l5.600-5.600z" stroke="#3b9ad0" stroke-width="1.200" fill="none"/><path d="M0.800 12.200v-5.400l5.400 5.400z" fill="#3b9ad0"/></svg>
<svg style="left:29px;top:879px;" width="14" height="14" viewBox="0 0 14 14"><path d="M7 0.500l2 4.300l4.700.6l-3.500 3.200l.9 4.700l-4.100-2.300l-4.100 2.300l.9-4.700l-3.500-3.200l4.700-.6z" fill="#666767"/></svg>
<div class="a" style="left:26px;top:902px;width:20px;height:1px;background:#2a5a55;"></div>
<svg style="left:29px;top:912px;" width="14" height="14" viewBox="0 0 14 14"><path d="M5.61 2.51L5.83 0.61L8.17 0.61L8.39 2.51L10.19 3.55L11.95 2.79L13.12 4.81L11.58 5.96L11.58 8.04L13.12 9.19L11.95 11.21L10.19 10.45L8.39 11.49L8.17 13.39L5.83 13.39L5.61 11.49L3.81 10.45L2.05 11.21L0.88 9.19L2.42 8.04L2.42 5.96L0.88 4.81L2.05 2.79L3.81 3.55zM9.10 7.00a2.1 2.1 0 1 0 -4.20 0a2.1 2.1 0 1 0 4.20 0z" fill="#c3c8c6" fill-rule="evenodd" stroke="#c3c8c6" stroke-width="0.3" stroke-linejoin="round"/><path d="M10.500 11.500h4l-2 2.300z" fill="#c3c8c6"/></svg>
<div class="a" style="left:25px;top:934px;width:22px;height:22px;background:#155a50;border:1px solid #2a7468;border-radius:3px"></div>
<svg style="left:29px;top:939px;" width="14" height="12" viewBox="0 0 14 12"><path d="M3.300 0.700h-2.600v10.600h2.600M10.700 0.700h2.600v10.600h-2.600" stroke="#d5dad8" stroke-width="1.400" fill="none"/><path d="M3 2.800h3.200l1 1.200h3.800v5.200h-8z" fill="#d5dad8"/></svg>
<svg style="left:58.2px;top:739.5px;" width="10" height="6" viewBox="0 0 10 6"><path d="M0.600 0.600l4.100 4.300l4.100-4.300" stroke="#aeb4b3" stroke-width="1.300" fill="none"/></svg>
<svg style="left:58.2px;top:779.5px;" width="10" height="6" viewBox="0 0 10 6"><path d="M0.600 0.600l4.100 4.300l4.100-4.300" stroke="#aeb4b3" stroke-width="1.300" fill="none"/></svg>
<svg style="left:76.7px;top:799.5px;" width="10" height="6" viewBox="0 0 10 6"><path d="M0.600 0.600l4.100 4.300l4.100-4.300" stroke="#aeb4b3" stroke-width="1.300" fill="none"/></svg>
<svg style="left:94px;top:756px;" width="13" height="13" viewBox="0 0 13 13"><path d="M1 1h5.500l6 6l-5.500 5.500l-6-6z" fill="#d6ab4c"/><circle cx="3.800" cy="3.800" r="1.200" fill="#21393e"/></svg>
<svg style="left:94px;top:797px;" width="14" height="12" viewBox="0 0 14 12"><path d="M0 0h5l1.500 2h7.500v9.200h-14z" fill="#b9bebd"/></svg>
<svg style="left:112px;top:816px;" width="14" height="14" viewBox="0 0 14 14"><path d="M7 0.500l2 4.300l4.700.6l-3.500 3.200l.9 4.700l-4.100-2.300l-4.100 2.300l.9-4.700l-3.500-3.200l4.700-.6z" fill="#d6ab4c"/></svg>
<div class="a" style="left:608px;top:685px;width:165px;height:24px;border:1px solid #153840;border-radius:4px;background:#213f3e"></div>
<svg style="left:614px;top:691px;" width="16" height="13" viewBox="0 0 16 13"><circle cx="5.500" cy="5.500" r="4.300" stroke="#7f9391" stroke-width="1.200" fill="none"/><path d="M8.600 8.600l3.600 3.600" stroke="#7f9391" stroke-width="1.400"/><path d="M11.500 4.500h4.200l-2.100 2.400z" fill="#7f9391"/></svg>
<svg style="left:784px;top:690px;" width="16" height="16" viewBox="0 0 16 16"><path d="M5.61 2.51L5.83 0.61L8.17 0.61L8.39 2.51L10.19 3.55L11.95 2.79L13.12 4.81L11.58 5.96L11.58 8.04L13.12 9.19L11.95 11.21L10.19 10.45L8.39 11.49L8.17 13.39L5.83 13.39L5.61 11.49L3.81 10.45L2.05 11.21L0.88 9.19L2.42 8.04L2.42 5.96L0.88 4.81L2.05 2.79L3.81 3.55zM9.10 7.00a2.1 2.1 0 1 0 -4.20 0a2.1 2.1 0 1 0 4.20 0z" fill="#c3c8c6" fill-rule="evenodd" stroke="#c3c8c6" stroke-width="0.3" stroke-linejoin="round"/><path d="M11 12h4.400l-2.200 2.500z" fill="#c3c8c6"/></svg>
<div class="a" style="left:807px;top:687px;width:1px;height:21px;background:#1f5a55;"></div>
<svg style="left:880px;top:692.5px;" width="6" height="10" viewBox="0 0 6 10"><path d="M0.300 3.800l2.500-3l2.500 3zM0.300 6.200l2.500 3l2.500-3z" fill="#9aa8a6"/></svg>
<svg style="left:945.8px;top:692.5px;" width="6" height="10" viewBox="0 0 6 10"><path d="M0.300 3.800l2.500-3l2.500 3zM0.300 6.200l2.500 3l2.500-3z" fill="#9aa8a6"/></svg>
<svg style="left:1011.8px;top:692.5px;" width="6" height="10" viewBox="0 0 6 10"><path d="M0.300 3.800l2.500-3l2.500 3zM0.300 6.200l2.500 3l2.500-3z" fill="#9aa8a6"/></svg>
<svg style="left:1082px;top:692.5px;" width="6" height="10" viewBox="0 0 6 10"><path d="M0.300 3.800l2.500-3l2.500 3zM0.300 6.200l2.500 3l2.500-3z" fill="#9aa8a6"/></svg>
<div class="a" style="left:1095px;top:687px;width:1px;height:21px;background:#1f5a55;"></div>
<svg style="left:1105px;top:690px;" width="14" height="14" viewBox="0 0 14 14"><path d="M12 5.500a5.200 5.200 0 0 0-9.500-1.500M2 8.500a5.200 5.200 0 0 0 9.500 1.500" stroke="#c3c8c6" stroke-width="1.700" fill="none"/><path d="M0.800 1.200v4.300h4.300zM13.200 12.800v-4.300h-4.300z" fill="#c3c8c6"/></svg>
<svg style="left:1131px;top:690px;" width="14" height="14" viewBox="0 0 14 14"><circle cx="4" cy="10" r="3.200" fill="#626666"/><circle cx="10" cy="10.500" r="3" fill="#626666"/><path d="M4 7c1-3 3.500-5.500 7-6c-2 2-2 4-1 6.500" stroke="#626666" stroke-width="1.300" fill="none"/></svg>
<svg style="left:1157px;top:690px;" width="15" height="14" viewBox="0 0 15 14"><path d="M4 0.500v11M10.500 13v-11" stroke="#c3c8c6" stroke-width="1.800"/><path d="M0.500 8.500h7l-3.500 4.500zM7 5h7l-3.500-4.500z" fill="#c3c8c6"/></svg>
<svg style="left:1182px;top:691px;" width="18" height="14" viewBox="0 0 18 14"><path d="M0.500 6c2-4.500 6-5.500 7.500-5.500s5.500 1 7.500 5.500c-2 4.500-6 5.500-7.500 5.500s-5.500-1-7.500-5.500z" fill="#c3c8c6"/><circle cx="8" cy="6" r="3.300" fill="#213f3e"/><circle cx="8" cy="6" r="1.700" fill="#c3c8c6"/><path d="M12.500 11.500h4.400l-2.200 2.500z" fill="#c3c8c6"/></svg>
<div class="a" style="left:1206px;top:687px;width:1px;height:21px;background:#1f5a55;"></div>
<svg style="left:1215px;top:690px;" width="17" height="14" viewBox="0 0 17 14"><path d="M0.300 13.300c1.800-.6 2-2 2-4v-6c0-1.600.7-2.400 2.300-2.400h7c1.600 0 2.300.8 2.300 2.400v6c0 2 .2 3.400 2 4" stroke="#c3c8c6" stroke-width="1.500" fill="none"/><path d="M8.200 3.500v7M4.700 7h7" stroke="#c3c8c6" stroke-width="1.600"/></svg>
<svg style="left:1488px;top:690px;" width="15" height="15" viewBox="0 0 15 15"><circle cx="6" cy="6" r="4.600" stroke="#c3c8c6" stroke-width="2" fill="none"/><path d="M9.500 9.500l4.300 4.300" stroke="#c3c8c6" stroke-width="2.300"/></svg>
<svg style="left:1519px;top:690px;" width="14" height="14" viewBox="0 0 14 14"><path d="M0.500 9.800h5.500M13.500 4.200h-5.500" stroke="#666767" stroke-width="1.700"/><path d="M4.800 6.600l3.600 3.200l-3.600 3.200zM9.200 1l-3.600 3.200l3.600 3.200z" fill="#666767"/></svg>
<svg style="left:1546px;top:690px;" width="14" height="14" viewBox="0 0 14 14"><path d="M5 4.600h3.800a3.500 3.500 0 0 1 0 7h-4.300" stroke="#666767" stroke-width="1.700" fill="none"/><path d="M5.600 0.800v7.600l-4.600-3.800z" fill="#666767"/></svg>
<div class="a" style="left:1568px;top:687px;width:1px;height:21px;background:#1f5a55;"></div>
<svg style="left:1579px;top:691px;" width="16" height="14" viewBox="0 0 16 14"><path d="M0.800 0.800h4v4h-4zM6.200 0.800h4v4h-4zM0.800 6.200h4v4h-4zM6.200 6.200h4v4h-4z" fill="#c3c8c6"/><path d="M10.500 11.500h4.400l-2.200 2.500z" fill="#c3c8c6"/></svg>
<svg style="left:1605px;top:691px;" width="16" height="14" viewBox="0 0 16 14"><path d="M0 0.500h13l-5 5.800v5.700l-3-1.500v-4.200z" fill="#c3c8c6"/><path d="M10.500 11.500h4.400l-2.200 2.500z" fill="#c3c8c6"/></svg>
<div class="a" style="left:1627px;top:687px;width:1px;height:21px;background:#1f5a55;"></div>
<svg style="left:1637px;top:691px;" width="16" height="14" viewBox="0 0 16 14"><path d="M0.500 0.500h7.300v4.800h-7.300zM8.800 0.500h4v4.800h-4zM0.500 6.300h12.300v4.400h-12.300z" fill="#c3c8c6"/><path d="M10.500 11.500h4.400l-2.200 2.500z" fill="#c3c8c6"/></svg>
<svg style="left:1851px;top:690px;" width="14" height="14" viewBox="0 0 14 14"><path d="M0.800 1h12.400M0.800 13h12.400" stroke="#666767" stroke-width="2"/><path d="M7 3.300l3.100 2.800h-6.200zM7 10.700l3.100-2.800h-6.200z" fill="#666767"/></svg>
<svg style="left:1877px;top:690px;" width="14" height="14" viewBox="0 0 14 14"><path d="M0.800 7h12.400" stroke="#666767" stroke-width="2"/><path d="M7 4.900l3.300-3.200h-6.600zM7 9.100l3.300 3.200h-6.600z" fill="#666767"/></svg>
<div class="a" style="left:605px;top:713px;width:905px;height:72px;background:#235941;"></div>
<div class="a" style="left:612.4px;top:725px;width:2px;height:48px;background:#a58650;"></div>
<div class="a" style="left:609.4px;top:721.2px;width:8px;height:8px;border-radius:50%;background:#a58650"></div>
<div class="a" style="left:609.4px;top:745.2px;width:8px;height:8px;border-radius:50%;background:#a58650"></div>
<div class="a" style="left:609.4px;top:769.2px;width:8px;height:8px;border-radius:50%;background:#a58650"></div>
<div class="a" style="left:1238px;top:716px;width:115px;height:18px;background:#33624d;"></div>
<svg style="left:1242px;top:718.5px;" width="22" height="13" viewBox="0 0 22 13"><path d="M0.300 0.800h5.700l6.200 6.200l-4.800 4.800l-7.100-7.100z" fill="#a878d6" transform="translate(9.200 0)"/><path d="M0.300 0.800h5.700l6.200 6.200l-4.800 4.800l-7.100-7.100z" fill="#4fb85a" transform="translate(4.600 0)"/><path d="M0.300 0.800h5.700l6.200 6.200l-4.800 4.800l-7.100-7.100z" fill="#e5c62f"/><circle cx="3" cy="3.600" r="1.100" fill="#33624d"/></svg>
<div class="a" style="left:1555px;top:926px;width:338px;height:62px;background:#203f3e;border:1px solid #183d42;border-radius:3px"></div>
<svg style="left:1565.5px;top:937px;" width="15" height="15" viewBox="0 0 15 15"><circle cx="7.500" cy="7.500" r="7.300" fill="#3b9ad0"/><path d="M7.500 6.300v5.200" stroke="#fff" stroke-width="1.900"/><circle cx="7.500" cy="3.900" r="1.150" fill="#fff"/></svg>
<div class="t" style="left:28.4px;top:661px;letter-spacing:0.07px">Version Control:</div>
<div class="t" style="left:141px;top:661px;letter-spacing:0.07px">Log</div>
<div class="t" style="left:31.5px;top:979px;color:#9aa8a6">»</div>
<div class="t" style="left:76.3px;top:715px;letter-spacing:-0.23px">HEAD (Current Branch)</div>
<div class="t" style="left:76.3px;top:735px;letter-spacing:-0.34px">Local</div>
<div class="t" style="left:112.4px;top:755px;letter-spacing:0.01px">master</div>
<div class="t" style="left:76.3px;top:775px;letter-spacing:-0.19px">Remote</div>
<div class="t" style="left:112.4px;top:795px;letter-spacing:0.33px">origin</div>
<div class="t" style="left:130.4px;top:815px;letter-spacing:-0.02px">master</div>
<div class="t" style="left:815.7px;top:689.5px;letter-spacing:-0.17px">Branch: All</div>
<div class="t" style="left:894.3px;top:689.5px;letter-spacing:-0.10px">User: All</div>
<div class="t" style="left:960.2px;top:689.5px;letter-spacing:-0.07px">Date: All</div>
<div class="t" style="left:1026px;top:689.5px;letter-spacing:-0.19px">Paths: All</div>
<div class="t" style="left:620.7px;top:717.5px;font-size:12.5px;color:#e6e9e6;font-weight:bold;letter-spacing:-0.56px">测试</div>
<div class="t" style="left:621.4px;top:741px;letter-spacing:0.16px">add halo.</div>
<div class="t" style="left:621.4px;top:765px;letter-spacing:0.12px">Initial commit</div>
<div class="t" style="left:1267px;top:717.5px;font-size:12.5px;color:#bcc6c0;letter-spacing:-0.12px">origin &amp; master</div>
<div class="t" style="left:1356px;top:717px;color:#e6e9e6;font-weight:bold;letter-spacing:-0.03px">wupeihao</div>
<div class="t" style="left:1428.4px;top:717px;color:#e6e9e6;font-weight:bold;letter-spacing:-0.08px">Today 11:36</div>
<div class="t" style="left:1356px;top:741px;font-size:12.5px;letter-spacing:-0.34px">吴沛昊*</div>
<div class="t" style="left:1428.4px;top:741px;letter-spacing:0.07px">Today 11:10</div>
<div class="t" style="left:1356px;top:765px;font-size:12.5px;letter-spacing:-0.34px">吴沛昊*</div>
<div class="t" style="left:1428.4px;top:765px;letter-spacing:-0.07px">Today 10:53</div>
<div class="t" style="left:1616.4px;top:772px;font-size:12.5px;color:#2fae6d;letter-spacing:0.18px">Select commit to view changes</div>
<div class="t" style="left:1587.4px;top:937px;color:#e6e9e6;font-weight:bold;letter-spacing:-0.05px">IntelliJ IDEA 2021.1.3 available</div>
<div class="t" style="left:1587.4px;top:959.5px;letter-spacing:-0.11px">Update...</div>

<svg style="left:7px;top:891px;" width="9" height="9" viewBox="0 0 9 9"><path d="M0 5h4v4h-4zM5 5h4v4h-4zM5 0h4v4h-4z" fill="#b9bebd"/></svg>
<svg style="left:5px;top:973px;" width="13" height="13" viewBox="0 0 13 13"><path d="M6.500 0.300l1.900 4.100l4.400.5l-3.300 3l.9 4.400l-3.900-2.200l-3.900 2.200l.9-4.400l-3.300-3l4.400-.5z" fill="#c9cecc"/></svg>
<div class="a" style="left:21px;top:998px;width:50px;height:21px;background:#3a7d74;"></div>
<svg style="left:32px;top:1004px;" width="11" height="12" viewBox="0 0 11 12"><path d="M1 0.300v11.200" stroke="#c9cecc" stroke-width="2"/><path d="M1.500 8h5.200v-4" stroke="#c9cecc" stroke-width="1.900" fill="none"/><path d="M3.500 4.200l3.200-4l3.200 4z" fill="#c9cecc"/></svg>
<svg style="left:83px;top:1005px;" width="11" height="9" viewBox="0 0 11 9"><path d="M0 0.800h1.800M0 4.500h1.800M0 8.200h1.800" stroke="#c9cecc" stroke-width="1.500"/><path d="M3.200 0.800h7M3.200 4.500h7M3.200 8.200h7" stroke="#c9cecc" stroke-width="1.500"/></svg>
<svg style="left:151px;top:1004px;" width="11" height="11" viewBox="0 0 11 11"><circle cx="5.500" cy="5.500" r="5.400" fill="#c9cecc"/><path d="M5.500 2.300v3.800" stroke="#22423f" stroke-width="1.600"/><circle cx="5.500" cy="8.300" r="0.900" fill="#22423f"/></svg>
<svg style="left:238px;top:1004px;" width="12" height="11" viewBox="0 0 12 11"><rect x="0" y="0" width="11.500" height="10" fill="#c9cecc"/><path d="M2.200 2.300l2.600 2.500l-2.600 2.500" stroke="#22423f" stroke-width="1.300" fill="none"/><path d="M5.800 7.800h3.500" stroke="#22423f" stroke-width="1.200"/></svg>
<svg style="left:320px;top:1003px;" width="14" height="13" viewBox="0 0 14 13"><path d="M5.500 0.800a5 5 0 1 0 0.010 10" stroke="#c9cecc" stroke-width="1.400" fill="none"/><path d="M5.500 0.800a5 5 0 0 1 4.900 4" stroke="#c9cecc" stroke-width="1.400" fill="none"/><path d="M5.500 3v3l1.500 1" stroke="#c9cecc" stroke-width="1.100" fill="none"/><path d="M7.500 6l5.500 3.300l-5.500 3.300z" fill="#c9cecc"/></svg>
<svg style="left:1820px;top:1003px;" width="14" height="14" viewBox="0 0 14 14"><circle cx="6.600" cy="6.600" r="6.500" fill="#d25252"/><rect x="6.600" y="6.600" width="6.500" height="6.500" fill="#d25252"/><text x="6.400" y="10.200" text-anchor="middle" font-family="Liberation Sans,sans-serif" font-weight="bold" font-size="10" fill="#fff">2</text></svg>
<svg style="left:6px;top:1024px;" width="12" height="12" viewBox="0 0 12 12"><path d="M2.500 0.500h9v9h-9z" stroke="#b9bebd" stroke-width="1" fill="none"/><path d="M0.500 2.500v9h9" stroke="#b9bebd" stroke-width="1" fill="none"/></svg>
<svg style="left:1831px;top:1023px;" width="10" height="14" viewBox="0 0 10 14"><path d="M2.200 2v10M2.200 9.500c0-2.500 5.300-2 5.300-5.500" stroke="#b9bebd" stroke-width="1.400" fill="none"/><circle cx="2.200" cy="2" r="1.700" fill="#b9bebd"/><circle cx="2.200" cy="11.800" r="1.700" fill="#b9bebd"/><circle cx="7.600" cy="3.600" r="1.700" fill="#b9bebd"/></svg>
<svg style="left:1899px;top:1024px;" width="9" height="12" viewBox="0 0 9 12"><rect x="0" y="5.300" width="8" height="5.700" fill="#b9bebd"/><path d="M-1.500 5.300v-2a1.700 1.700 0 0 1 3.400 0v2" stroke="#b9bebd" stroke-width="1.100" fill="none"/></svg>
<div class="a" style="left:48px;top:1040px;width:344px;height:1px;background:#c9cccb;"></div>
<div class="t" style="left:-11.6px;top:851.5px;width:48.0px;transform-origin:50% 50%;transform:rotate(-90deg);font-size:12px;letter-spacing:-0.08px">Structure</div>
<div class="t" style="left:-10.8px;top:937.8px;width:46.5px;transform-origin:50% 50%;transform:rotate(-90deg);font-size:12px;letter-spacing:-0.32px">Favorites</div>
<div class="t" style="left:47.5px;top:1002px;font-size:12.5px;letter-spacing:-0.43px">Git</div>
<div class="t" style="left:98px;top:1002px;font-size:12.5px;letter-spacing:-1.02px">TODO</div>
<div class="t" style="left:167.2px;top:1002px;font-size:12.5px;letter-spacing:-0.45px">Problems</div>
<div class="t" style="left:254px;top:1002px;font-size:12.5px;letter-spacing:-0.32px">Terminal</div>
<div class="t" style="left:337px;top:1002px;font-size:12.5px;letter-spacing:-0.16px">Profiler</div>
<div class="t" style="left:1837.5px;top:1002px;font-size:12.5px;letter-spacing:-0.57px">Event Log</div>
<div class="t" style="left:27.4px;top:1022px;letter-spacing:-0.02px">IntelliJ IDEA 2021.1.3 available // Update... (16 minutes ago)</div>
<div class="t" style="left:1644.6px;top:1022px;letter-spacing:-0.48px">3:17</div>
<div class="t" style="left:1680.4px;top:1022px;font-size:12px;letter-spacing:-0.84px">CRLF</div>
<div class="t" style="left:1720.5px;top:1022px;letter-spacing:-0.61px">UTF-8</div>
<div class="t" style="left:1766.3px;top:1022px;letter-spacing:-0.23px">4 spaces</div>
<div class="t" style="left:1846.6px;top:1022px;letter-spacing:-0.06px">master</div>

<div class="a" style="left:1580px;top:7px;width:306px;height:82px;border:4px solid #ea2229;border-radius:3px"></div>
<div class="t" style="left:1798.5px;top:1016.3px;font-size:14.5px;color:rgba(225,230,230,0.80);letter-spacing:-1.20px;text-shadow:1px 1px 1px rgba(0,0,0,0.5)">CSDN @</div>
<div class="t" style="left:1852px;top:1015.8px;font-size:15.3px;color:rgba(225,230,230,0.80);letter-spacing:0.20px;text-shadow:1px 1px 1px rgba(0,0,0,0.5)">小皮猪</div>

</body>
</html>
